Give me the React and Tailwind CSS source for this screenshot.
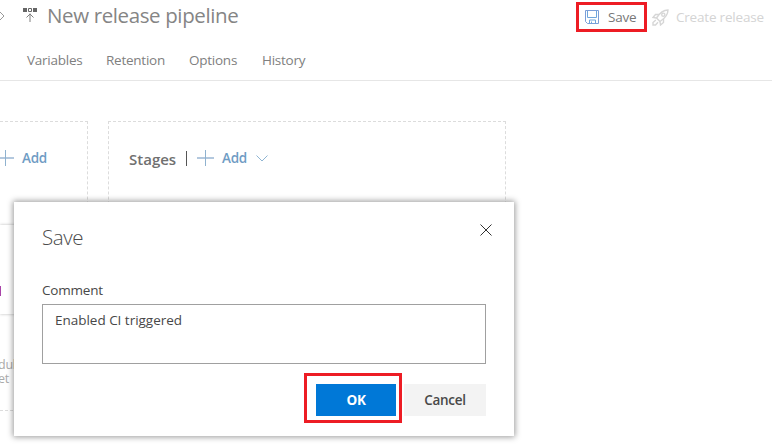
import React from "react";

function PipelineIcon() {
  return (
    <svg width="15" height="16" viewBox="0 0 15 16" className="shrink-0">
      <path d="M0 1h4v4H0zM10 1h4v4h-4z" fill="#666" />
      <path d="M5.500 1.500h3v3h-3z" fill="none" stroke="#666" />
      <path d="M7 15V6.500M3.500 10.500L7 7L10.500 10.500" fill="none" stroke="#808080" />
    </svg>
  );
}

function SaveIcon() {
  return (
    <svg width="14" height="14" viewBox="0 0 14 14" className="shrink-0">
      <path d="M.5 .5H13.500V13.500H2.500L.5 11.500Z" fill="none" stroke="#7b9ed8" />
      <path d="M2.500 1V7.500H11.500V1M4.500 13.500V10H10.500V13.500M6.500 11.500V13.500" fill="none" stroke="#6fa6dc" />
    </svg>
  );
}

function RocketIcon() {
  return (
    <svg width="17" height="17" viewBox="0 0 17 17" className="shrink-0" fill="none" stroke="#d6d6d6" strokeWidth="1.4">
      <path d="M16 1C11 1 8 3.500 4.500 9L8 12.500C13.500 9 16 6 16 1Z" />
      <circle cx="11.300" cy="5.700" r="1.600" />
      <path d="M7 5.500H3.500L1 8.500L4.500 9M11.500 10V13.500L8.500 16L8 12.500M3.800 11L1 13.500V16H3.500L6 13.200" />
    </svg>
  );
}

function Plus() {
  return (
    <svg width="17" height="16" viewBox="0 0 17 16" className="shrink-0">
      <path d="M0 8H17" stroke="#b3c8de" strokeWidth="2" />
      <path d="M8.500 0V16" stroke="#8fb2cf" />
    </svg>
  );
}

export default function App() {
  return (
    <div className="relative h-[446px] w-[772px] overflow-hidden bg-white font-['Open_Sans','Noto_Sans',sans-serif] text-[13.500px] tracking-[-0.25px] text-[#808080]">
      <header className="flex h-[34px] items-start">
        <svg width="5" height="12" viewBox="0 0 5 12" className="mt-[10px] shrink-0">
          <path d="M0 2L4 6L0 10" fill="none" stroke="#999" />
        </svg>
        <div className="ml-[18px] mt-[7px]">
          <PipelineIcon />
        </div>
        <h1 className="ml-[9px] mt-[1px] w-[200px] whitespace-nowrap text-[20.500px] leading-[28px] tracking-[-0.38px] text-[#858585]">
          New release pipeline
        </h1>
        <button className="ml-auto mt-[2px] flex h-[30px] w-[71px] items-center border-3 border-[#ed1c24] pl-[6px]">
          <SaveIcon />
          <span className="ml-[9px] mt-px text-[#777]">Save</span>
        </button>
        <button className="ml-[5px] mt-[2px] flex h-[30px] w-[120px] items-center whitespace-nowrap text-[#d4d4d4]">
          <RocketIcon />
          <span className="ml-[7px] mt-px tracking-[-0.2px]">Create release</span>
        </button>
      </header>
      <nav className="flex h-[47px] border-b border-[#e6e6e6] pl-[27px] pt-[16px] leading-[20px]">
        <span className="w-[79px]">Variables</span>
        <span className="w-[83px]">Retention</span>
        <span className="w-[73px]">Options</span>
        <span>History</span>
      </nav>
      <main className="flex gap-[20px] pt-[40px]">
        <section className="flex h-[290px] w-[88px] flex-col border border-l-0 border-dashed border-[#dcdcdc]">
          <div className="-ml-[3px] mt-[28px] flex h-[16px] items-center font-semibold text-[#6f9cc4]">
            <Plus />
            <span className="ml-[8px] mt-px">Add</span>
          </div>
          <div className="mt-[59px] flex h-[89px] w-[70px] items-center bg-white pt-[43px] shadow-[0_0_3px_#bbb]">
            <span className="h-[10px] w-px bg-[#a844a8]" />
          </div>
          <p className="-ml-[2px] mt-[44px] w-[30px] text-[12.500px] leading-[14px] text-[#aaa]">
            dul
            <br />
            et
          </p>
        </section>
        <section className="flex h-[290px] w-[398px] items-start border border-dashed border-[#dcdcdc] pl-[20px] pt-[28px]">
          <span className="w-[57px] text-[15px] font-semibold leading-[18px] tracking-[0px] text-[#707070]">Stages</span>
          <span className="mt-[1px] h-[15px] w-px bg-[#555]" />
          <div className="ml-[10px] flex h-[16px] items-center font-semibold text-[#6f9cc4]">
            <Plus />
            <span className="ml-[8px] mt-px">Add</span>
            <svg width="12" height="7" viewBox="0 0 12 7" className="ml-[9px]">
              <path d="M.5 .5L6 6L11.500 .5" fill="none" stroke="#8fb5d3" />
            </svg>
          </div>
        </section>
      </main>

      <div
        role="dialog"
        className="absolute left-[14px] top-[202px] flex h-[234px] w-[500px] flex-col bg-white px-[28px] pt-[21px] text-[#484848] shadow-[0_0_6px_1px_rgba(0,0,0,0.4)]"
      >
        <div className="flex h-[57px] items-start justify-between">
          <h2 className="text-[20.500px] font-light leading-[28px] tracking-[-0.4px] text-[#4c4c4c]">Save</h2>
          <svg width="12" height="12" viewBox="0 0 12 12" className="mr-[-6px] mt-px">
            <path d="M.5 .5L11.500 11.500M11.500 .5L.5 11.500" stroke="#333" />
          </svg>
        </div>
        <label className="h-[24px] leading-[20px] tracking-[-0.2px]">Comment</label>
        <div className="h-[60px] shrink-0 border border-[#a0a0a0] pl-[12px] pt-[5px] leading-[20px]">
          <span className="tracking-[-0.02px]">Enabled CI triggered</span>
        </div>
        <div className="mt-[9px] flex justify-end">
          <div className="flex h-[50px] w-[98px] border-3 border-[#ed1c24] pl-[9px] pt-[8px]">
            <button className="h-[32px] w-[80px] bg-[#0078d7] font-bold text-white">OK</button>
          </div>
          <button className="ml-[2px] mt-[11px] h-[32px] w-[82px] bg-[#f3f3f3] font-semibold">Cancel</button>
        </div>
      </div>
    </div>
  );
}
